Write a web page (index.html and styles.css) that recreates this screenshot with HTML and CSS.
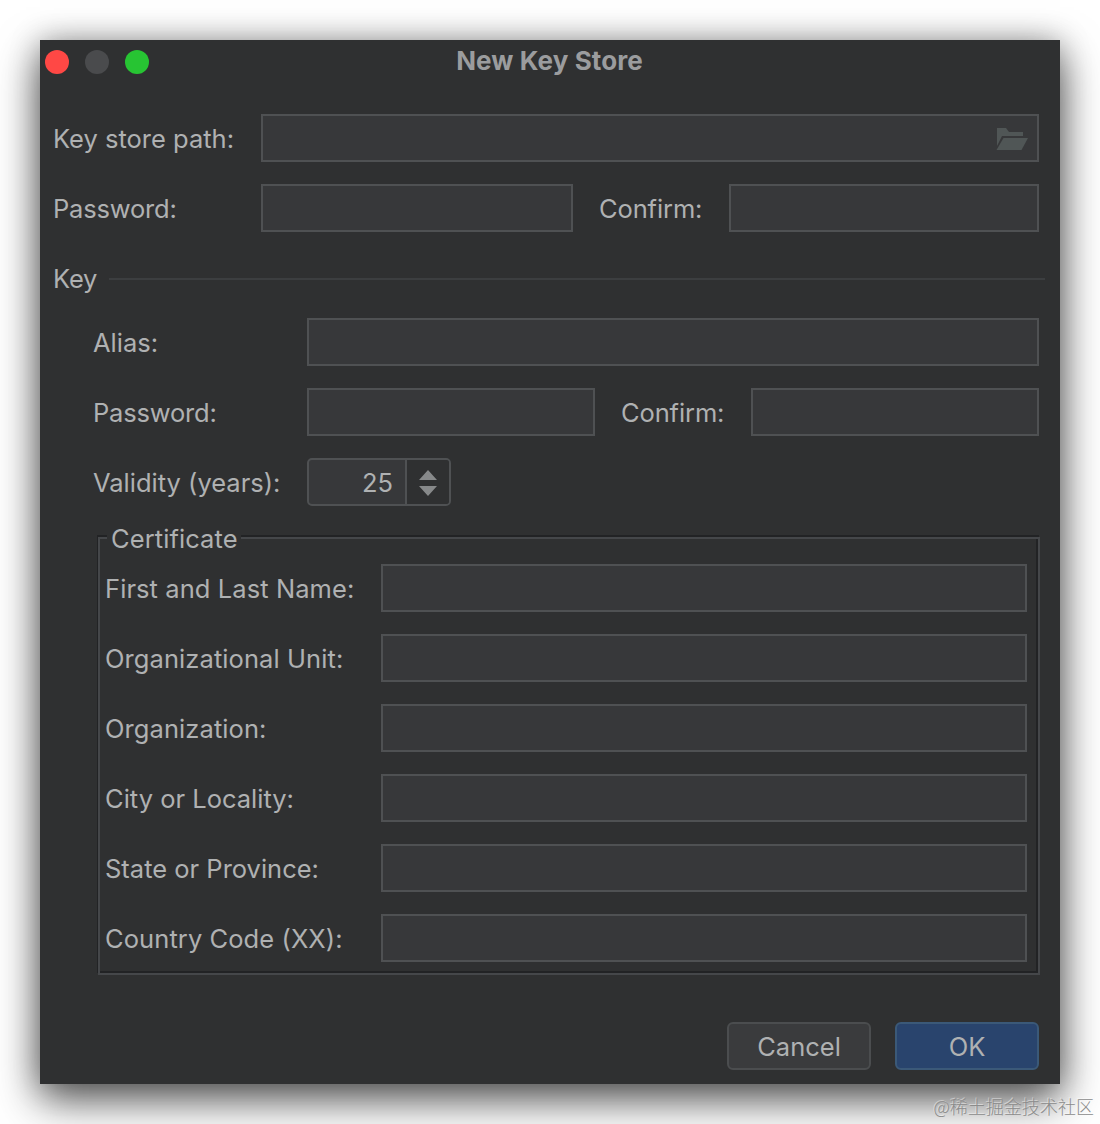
FILE: index.html
```html
<!DOCTYPE html>
<html lang="en">
<head>
<meta charset="utf-8">
<title>New Key Store</title>
<link rel="stylesheet" href="styles.css">
</head>
<body>
<main class="window">
  <header class="titlebar">
    <div class="lights"><span class="light close"></span><span class="light minimize"></span><span class="light expand"></span></div>
    <h1 class="title">New Key Store</h1>
  </header>
  <section class="store">
    <div class="row"><label class="label">Key store path:</label>
      <div class="field path">
        <svg class="folder" width="32" height="24" viewBox="0 0 32 24"><path d="M1 0H10L13 4H27V8H6L1 18Z"/><path d="M7.5 10H32L25.5 22H.5Z"/></svg>
      </div>
    </div>
    <div class="row"><label class="label tight">Password:</label><div class="field"></div>
      <label class="confirm">Confirm:</label><div class="field last"></div></div>
  </section>
  <div class="section-title"><span class="tight">Key</span><span class="rule"></span></div>
  <section class="key">
    <div class="row"><label class="label">Alias:</label><div class="field"></div></div>
    <div class="row"><label class="label tight">Password:</label><div class="field"></div>
      <label class="confirm">Confirm:</label><div class="field"></div></div>
    <div class="row"><label class="label">Validity (years):</label>
      <div class="spinner"><span class="value">25</span><span class="arrows"><svg width="18" height="26" viewBox="0 0 18 26"><path d="M0 10L9 0L18 10ZM0 16H18L9 26Z"/></svg></span></div></div>
  </section>
  <section class="certificate">
    <h2 class="legend">Certificate</h2>
    <div class="row"><label class="label wide">First and Last Name:</label><div class="field"></div></div>
    <div class="row"><label class="label wide">Organizational Unit:</label><div class="field"></div></div>
    <div class="row"><label class="label wide">Organization:</label><div class="field"></div></div>
    <div class="row"><label class="label">City or Locality:</label><div class="field"></div></div>
    <div class="row"><label class="label">State or Province:</label><div class="field"></div></div>
    <div class="row"><label class="label wide">Country Code (XX):</label><div class="field"></div></div>
  </section>
  <footer class="actions">
    <button class="button">Cancel</button>
    <button class="button primary">OK</button>
  </footer>
</main>
<div class="watermark">@稀土掘金技术社区</div>
</body>
</html>
```
FILE: styles.css
```css
* { box-sizing: border-box; }
body {
  margin: 0;
  height: 1124px;
  padding: 40px;
  overflow: hidden;
  background: #fff;
  color: #afb1b2;
  font: 25.5px/30px Inter, "Liberation Sans", sans-serif;
}
.window {
  display: flex;
  flex-direction: column;
  height: 1044px;
  background: #2f3031;
  box-shadow: 0 16px 40px rgba(0, 0, 0, .65), 0 0 28px rgba(0, 0, 0, .25);
}
.titlebar {
  display: grid;
  grid-template-columns: 109px 1fr 115px;
  align-items: center;
  height: 44px;
  padding-left: 5px;
}
.lights { display: flex; gap: 16px; }
.light { width: 24px; height: 24px; border-radius: 50%; }
.close { background: #ff4845; }
.minimize { background: #4a4b4d; }
.expand { background: #27c433; }
.title {
  margin: 0 0 2px;
  text-align: center;
  font-size: 26px;
  line-height: 30px;
  font-weight: 700;
  letter-spacing: .1px;
  color: #9b9c9e;
}
.row { display: flex; height: 48px; align-items: center; }
.label { flex: none; padding-top: 2px; white-space: nowrap; }
.tight { letter-spacing: -.2px; }
.wide { letter-spacing: .08px; }
.confirm {
  flex: none;
  width: 156px;
  padding: 2px 0 0 26px;
  white-space: nowrap;
  letter-spacing: -.12px;
}
.field {
  flex: 1 1 0;
  height: 48px;
  border: 2px solid #4f5153;
  background: #37383a;
}
.store {
  display: flex;
  flex-direction: column;
  gap: 22px;
  padding: 30px 21px 0 13px;
}
.store .label { width: 208px; }
.store .last { flex: none; width: 310px; }
.path {
  display: flex;
  align-items: center;
  justify-content: flex-end;
  padding: 4px 9px 0 0;
}
.folder { fill: #505656; }
.section-title {
  display: flex;
  align-items: center;
  gap: 12px;
  height: 30px;
  margin: 32px 15px 24px 13px;
}
.rule { flex: 1; height: 2px; background: #3c3e40; }
.key {
  display: flex;
  flex-direction: column;
  gap: 22px;
  padding: 0 21px 0 53px;
}
.key .label { width: 214px; }
.spinner {
  display: flex;
  width: 144px;
  height: 48px;
  overflow: hidden;
  border: 2px solid #4f5153;
  border-radius: 5px;
  background: #37383a;
}
.value { width: 96px; padding: 8px 12px 0 0; text-align: right; }
.arrows {
  flex: 1;
  display: flex;
  align-items: center;
  justify-content: center;
  padding: 2px 1px 0 0;
  border-left: 2px solid #4f5153;
  background: #2f3031;
}
.arrows svg { fill: #87898a; }
.certificate {
  display: flex;
  flex-direction: column;
  gap: 22px;
  height: 438px;
  margin: 31px 20px 0 58px;
  padding: 0 11px 0 5px;
  border: 2px solid #45474a;
  box-shadow: -1px -2px 0 #222325, inset -2px -2px 0 #222325;
}
.legend {
  align-self: flex-start;
  width: 134px;
  height: 30px;
  margin: -15px 0 -12px 2px;
  padding-left: 4px;
  font: inherit;
  letter-spacing: .08px;
  background: #2f3031;
}
.certificate .label { width: 276px; }
.actions {
  display: flex;
  justify-content: flex-end;
  gap: 24px;
  margin: 47px 21px 0 0;
}
.button {
  width: 144px;
  height: 48px;
  padding: 2px 0 0;
  border: 2px solid #4b4d4f;
  border-radius: 6px;
  background: #3a3b3d;
  color: inherit;
  font: inherit;
}
.primary { border-color: #3b5978; background: #29446d; }
.watermark {
  position: absolute;
  right: 6px;
  bottom: 6px;
  font: 300 18px/24px "Noto Sans CJK SC", sans-serif;
  color: #8c8c8c;
  text-shadow: -1px -1px 0 rgba(255, 255, 255, .45);
}
```
